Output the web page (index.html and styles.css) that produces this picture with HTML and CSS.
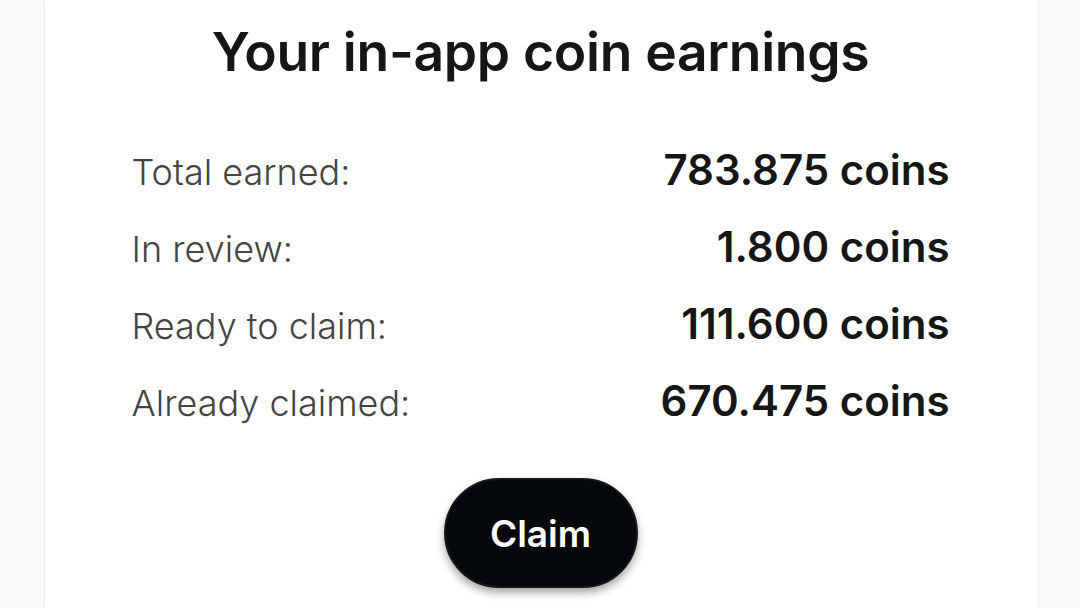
FILE: index.html
```html
<!DOCTYPE html>
<html>
<head>
<meta charset="utf-8">
<link rel="stylesheet" href="styles.css">
</head>
<body>
<main class="card">
  <h1 class="title">Your in-app coin earnings</h1>
  <dl class="stats">
    <div class="row"><dt>Total earned:</dt><dd>783.875 coins</dd></div>
    <div class="row"><dt>In review:</dt><dd>1.800 coins</dd></div>
    <div class="row"><dt>Ready to claim:</dt><dd>111.600 coins</dd></div>
    <div class="row"><dt>Already claimed:</dt><dd>670.475 coins</dd></div>
  </dl>
  <div class="actions"><button class="claim">Claim</button></div>
</main>
</body>
</html>
```
FILE: styles.css
```css
html, body {
  margin: 0;
  padding: 0;
  height: 100%;
  background: #f8f9fa;
  font-family: Inter, "Noto Sans", sans-serif;
  overflow: hidden;
}
body {
  display: flex;
  justify-content: center;
}
.card {
  width: 993px;
  margin-left: 2px;
  background: #fff;
  box-shadow: 0 0 3px rgba(0,0,0,0.12);
  box-sizing: border-box;
  padding: 22px 88px 0 87px;
  height: 100%;
}
.title {
  margin: 0;
  text-align: center;
  font-size: 53.4px;
  font-weight: 600;
  color: #161616;
  letter-spacing: -0.3px;
  line-height: 60px;
}
.stats {
  margin: 62px 0 0;
  display: flex;
  flex-direction: column;
  gap: 25px;
}
.row {
  display: flex;
  justify-content: space-between;
  align-items: baseline;
  height: 52px;
}
.row dt {
  font-size: 36px;
  font-weight: 300;
  color: #444;
  line-height: 52px;
}
.row dd {
  margin: 0;
  font-size: 42px;
  font-weight: 600;
  color: #161616;
  line-height: 52px;
}
.actions {
  display: flex;
  justify-content: center;
  margin-top: 51px;
}
.claim {
  width: 194px;
  height: 110px;
  border-radius: 55px;
  background: #05090c;
  border: 2px solid #15191d;
  color: #fff;
  font-family: inherit;
  font-size: 37px;
  font-weight: 600;
  box-shadow: 0 5px 8px rgba(0,0,0,0.35);
}
```
